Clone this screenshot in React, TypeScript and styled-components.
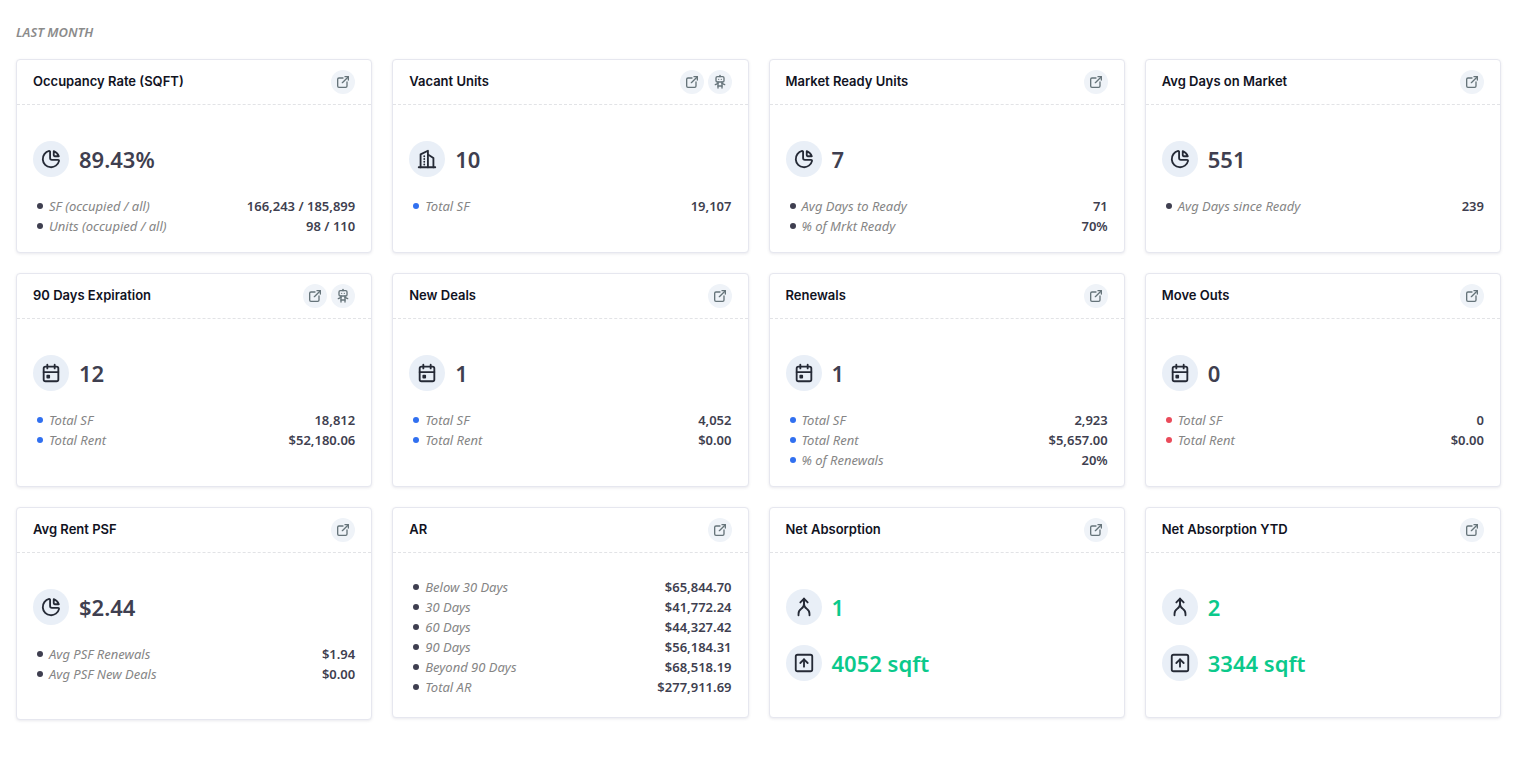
import React from "react";
import styled, { createGlobalStyle } from "styled-components";
import type { IconType } from "react-icons";
import {
  TbArrowMerge,
  TbBuildingSkyscraper,
  TbCalendarEvent,
  TbChartPie,
  TbExternalLink,
  TbRobot,
  TbSquareArrowUp,
} from "react-icons/tb";

type Tone = "dark" | "blue" | "red";

interface Detail {
  label: string;
  value: string;
}

interface Metric {
  icon: IconType;
  value: string;
}

interface CardData {
  title: string;
  metrics: Metric[];
  details?: Detail[];
  tone?: Tone;
  positive?: boolean;
  robot?: boolean;
  bodyHeight?: number;
}

const toneColors: Record<Tone, string> = {
  dark: "#3f3f50",
  blue: "#3170f0",
  red: "#ea4a5a",
};

const GlobalStyle = createGlobalStyle`
  *, *::before, *::after {
    box-sizing: border-box;
  }
  body {
    margin: 0;
    background: #ffffff;
    color: #3f3f50;
    font-family: "Noto Sans", "Open Sans", sans-serif;
    font-size: 13px;
    line-height: 20px;
  }
`;

const Page = styled.main`
  padding: 22px 17px 36px 16px;
`;

const Period = styled.h1`
  margin: 0 0 17px;
  font-size: 13px;
  line-height: 20px;
  font-weight: 600;
  font-style: italic;
  text-transform: uppercase;
  color: #8b8b8b;
`;

const Grid = styled.div`
  display: grid;
  grid-template-columns: repeat(4, minmax(0, 1fr));
  gap: 20px;
`;

const Card = styled.section<{ $top?: boolean }>`
  align-self: ${({ $top }) => ($top ? "start" : "stretch")};
  border: 1px solid #e6e7ef;
  border-radius: 4px;
  background: #ffffff;
  box-shadow: 0 1px 3px rgba(40, 40, 80, 0.1);
`;

const Header = styled.header`
  display: flex;
  align-items: center;
  justify-content: space-between;
  height: 45px;
  padding: 0 16px;
  border-bottom: 1px dashed #e2e3e6;
`;

const Title = styled.h2`
  margin: 0 0 2px;
  font-family: Inter, sans-serif;
  font-size: 13px;
  line-height: 20px;
  font-weight: 600;
  color: #11131f;
`;

const Actions = styled.div`
  display: flex;
  gap: 4px;
`;

const Action = styled.button`
  display: flex;
  align-items: center;
  justify-content: center;
  width: 24px;
  height: 24px;
  padding: 0;
  border: 0;
  border-radius: 50%;
  background: #eff3f8;
  color: #66747a;
  cursor: pointer;
`;

const Body = styled.div<{ $minHeight: number; $listOnly: boolean }>`
  min-height: ${({ $minHeight }) => $minHeight}px;
  padding: ${({ $listOnly }) => ($listOnly ? "24px" : "36px")} 16px 16px;
`;

const Metrics = styled.div`
  display: flex;
  flex-direction: column;
  gap: 20px;
`;

const MetricRow = styled.div`
  display: flex;
  align-items: center;
  gap: 10px;
`;

const IconDisc = styled.span`
  display: flex;
  flex: none;
  align-items: center;
  justify-content: center;
  width: 36px;
  height: 36px;
  border-radius: 50%;
  background: #e9eff7;
  color: #252a36;
`;

const Value = styled.strong<{ $positive?: boolean }>`
  font-size: 22px;
  line-height: 36px;
  font-weight: 600;
  color: ${({ $positive }) => ($positive ? "#0bc98b" : "#3f3f50")};
`;

const Details = styled.dl<{ $spaced: boolean }>`
  margin: ${({ $spaced }) => ($spaced ? "19px" : "0")} 0 0;
`;

const DetailRow = styled.div`
  display: flex;
  justify-content: space-between;
`;

const Label = styled.dt<{ $tone: Tone }>`
  display: flex;
  align-items: center;
  gap: 6px;
  padding-left: 4px;
  font-style: italic;
  color: #858585;

  &::before {
    content: "";
    width: 6px;
    height: 6px;
    border-radius: 50%;
    background: ${({ $tone }) => toneColors[$tone]};
  }
`;

const Amount = styled.dd`
  margin: 0;
  font-weight: 600;
`;

const cards: CardData[] = [
  {
    title: "Occupancy Rate (SQFT)",
    metrics: [{ icon: TbChartPie, value: "89.43%" }],
    details: [
      { label: "SF (occupied / all)", value: "166,243 / 185,899" },
      { label: "Units (occupied / all)", value: "98 / 110" },
    ],
  },
  {
    title: "Vacant Units",
    robot: true,
    tone: "blue",
    metrics: [{ icon: TbBuildingSkyscraper, value: "10" }],
    details: [{ label: "Total SF", value: "19,107" }],
  },
  {
    title: "Market Ready Units",
    metrics: [{ icon: TbChartPie, value: "7" }],
    details: [
      { label: "Avg Days to Ready", value: "71" },
      { label: "% of Mrkt Ready", value: "70%" },
    ],
  },
  {
    title: "Avg Days on Market",
    metrics: [{ icon: TbChartPie, value: "551" }],
    details: [{ label: "Avg Days since Ready", value: "239" }],
  },
  {
    title: "90 Days Expiration",
    robot: true,
    tone: "blue",
    metrics: [{ icon: TbCalendarEvent, value: "12" }],
    details: [
      { label: "Total SF", value: "18,812" },
      { label: "Total Rent", value: "$52,180.06" },
    ],
  },
  {
    title: "New Deals",
    tone: "blue",
    metrics: [{ icon: TbCalendarEvent, value: "1" }],
    details: [
      { label: "Total SF", value: "4,052" },
      { label: "Total Rent", value: "$0.00" },
    ],
  },
  {
    title: "Renewals",
    tone: "blue",
    metrics: [{ icon: TbCalendarEvent, value: "1" }],
    details: [
      { label: "Total SF", value: "2,923" },
      { label: "Total Rent", value: "$5,657.00" },
      { label: "% of Renewals", value: "20%" },
    ],
  },
  {
    title: "Move Outs",
    tone: "red",
    metrics: [{ icon: TbCalendarEvent, value: "0" }],
    details: [
      { label: "Total SF", value: "0" },
      { label: "Total Rent", value: "$0.00" },
    ],
  },
  {
    title: "Avg Rent PSF",
    bodyHeight: 166,
    metrics: [{ icon: TbChartPie, value: "$2.44" }],
    details: [
      { label: "Avg PSF Renewals", value: "$1.94" },
      { label: "Avg PSF New Deals", value: "$0.00" },
    ],
  },
  {
    title: "AR",
    bodyHeight: 164,
    metrics: [],
    details: [
      { label: "Below 30 Days", value: "$65,844.70" },
      { label: "30 Days", value: "$41,772.24" },
      { label: "60 Days", value: "$44,327.42" },
      { label: "90 Days", value: "$56,184.31" },
      { label: "Beyond 90 Days", value: "$68,518.19" },
      { label: "Total AR", value: "$277,911.69" },
    ],
  },
  {
    title: "Net Absorption",
    bodyHeight: 164,
    positive: true,
    metrics: [
      { icon: TbArrowMerge, value: "1" },
      { icon: TbSquareArrowUp, value: "4052 sqft" },
    ],
  },
  {
    title: "Net Absorption YTD",
    bodyHeight: 164,
    positive: true,
    metrics: [
      { icon: TbArrowMerge, value: "2" },
      { icon: TbSquareArrowUp, value: "3344 sqft" },
    ],
  },
];

function StatCard({
  title,
  metrics,
  details,
  tone = "dark",
  positive,
  robot,
  bodyHeight,
}: CardData) {
  return (
    <Card $top={bodyHeight !== undefined}>
      <Header>
        <Title>{title}</Title>
        <Actions>
          <Action type="button" aria-label={`Open ${title}`}>
            <TbExternalLink size={16} />
          </Action>
          {robot && (
            <Action type="button" aria-label={`Ask assistant about ${title}`}>
              <TbRobot size={16} />
            </Action>
          )}
        </Actions>
      </Header>
      <Body $minHeight={bodyHeight ?? 147} $listOnly={metrics.length === 0}>
        {metrics.length > 0 && (
          <Metrics>
            {metrics.map(({ icon: Icon, value }) => (
              <MetricRow key={value}>
                <IconDisc>
                  <Icon size={22} aria-hidden />
                </IconDisc>
                <Value $positive={positive}>{value}</Value>
              </MetricRow>
            ))}
          </Metrics>
        )}
        {details && (
          <Details $spaced={metrics.length > 0}>
            {details.map(({ label, value }) => (
              <DetailRow key={label}>
                <Label $tone={tone}>{label}</Label>
                <Amount>{value}</Amount>
              </DetailRow>
            ))}
          </Details>
        )}
      </Body>
    </Card>
  );
}

export default function App() {
  return (
    <>
      <GlobalStyle />
      <Page>
        <Period>Last month</Period>
        <Grid>
          {cards.map((card) => (
            <StatCard key={card.title} {...card} />
          ))}
        </Grid>
      </Page>
    </>
  );
}
